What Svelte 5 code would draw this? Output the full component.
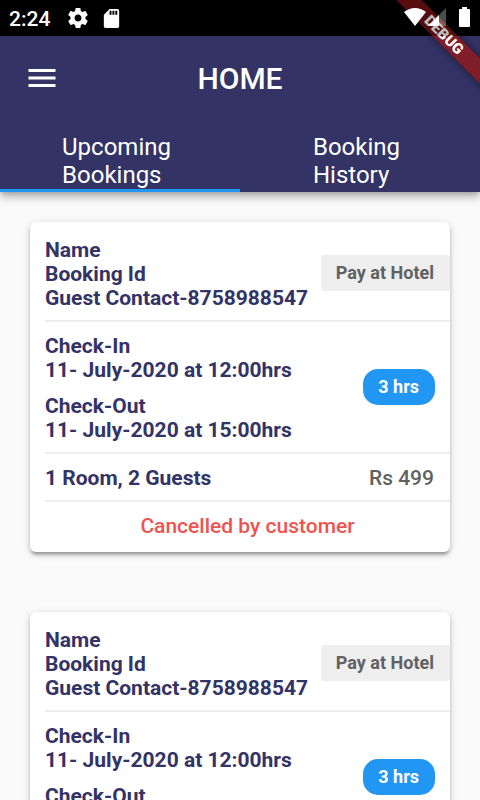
<script>
  let activeTab = $state(0);

  const tabs = [
    ['Upcoming', 'Bookings'],
    ['Booking', 'History'],
  ];

  const booking = {
    contact: '8758988547',
    payment: 'Pay at Hotel',
    checkIn: '11- July-2020 at 12:00hrs',
    checkOut: '11- July-2020 at 15:00hrs',
    duration: '3 hrs',
    party: '1 Room, 2 Guests',
    price: 'Rs 499',
    status: 'Cancelled by customer',
  };
  const bookings = [
    { id: 1, ...booking },
    { id: 2, ...booking },
  ];
</script>

<div class="screen">
  <div class="status-bar">
    <span class="clock">2:24</span>
    <svg class="gear" viewBox="0 0 24 24" aria-hidden="true">
      <path d="M19.43 12.98c.04-.32.07-.64.07-.98s-.03-.66-.07-.98l2.11-1.65c.19-.15.24-.42.12-.64l-2-3.46c-.12-.22-.39-.3-.61-.22l-2.49 1c-.52-.4-1.08-.73-1.69-.98l-.38-2.65C14.46 2.18 14.25 2 14 2h-4c-.25 0-.46.18-.49.42l-.38 2.65c-.61.25-1.17.59-1.69.98l-2.49-1c-.23-.09-.49 0-.61.22l-2 3.46c-.13.22-.07.49.12.64l2.11 1.65c-.04.32-.07.65-.07.98s.03.66.07.98l-2.11 1.65c-.19.15-.24.42-.12.64l2 3.46c.12.22.39.3.61.22l2.49-1c.52.4 1.08.73 1.69.98l.38 2.65c.03.24.24.42.49.42h4c.25 0 .46-.18.49-.42l.38-2.65c.61-.25 1.17-.59 1.69-.98l2.49 1c.23.09.49 0 .61-.22l2-3.46c.12-.22.07-.49-.12-.64l-2.11-1.65zM12 15.5c-1.93 0-3.5-1.57-3.5-3.5s1.57-3.5 3.5-3.5 3.5 1.57 3.5 3.5-1.57 3.5-3.5 3.5z" />
    </svg>
    <svg class="card-icon" viewBox="0 0 24 24" aria-hidden="true">
      <path d="M18 2h-8L4.02 8 4 20c0 1.1.9 2 2 2h12c1.1 0 2-.9 2-2V4c0-1.1-.9-2-2-2zm-6 6h-2V4h2v4zm3 0h-2V4h2v4zm3 0h-2V4h2v4z" />
    </svg>
    <div class="signals">
      <svg width="24" height="20" viewBox="0 0 24 20" aria-hidden="true">
        <path d="M12 19 1 5Q12-3 23 5Z" />
      </svg>
      <svg width="20" height="20" viewBox="0 0 20 20" aria-hidden="true">
        <path d="M1 19 19 1V19Z" opacity="0.3" />
        <path d="M1 19 12 8V19Z" />
      </svg>
      <svg class="battery" width="11" height="20" viewBox="0 0 11 20" aria-hidden="true">
        <path d="M3 0H8V2H10Q11 2 11 3V19Q11 20 10 20H1Q0 20 0 19V3Q0 2 1 2H3Z" />
      </svg>
    </div>
  </div>

  <header>
    <div class="toolbar">
      <button class="menu" aria-label="Open menu">
        <svg width="36" height="36" viewBox="0 0 24 24" aria-hidden="true">
          <path d="M3 18h18v-2H3v2zm0-5h18v-2H3v2zm0-7v2h18V6H3z" />
        </svg>
      </button>
      <h1>HOME</h1>
    </div>
    <div class="tabs" role="tablist">
      {#each tabs as [first, second], i}
        <button
          role="tab"
          class:active={activeTab === i}
          aria-selected={activeTab === i}
          onclick={() => (activeTab = i)}
        >
          <span>{first}<br />{second}</span>
        </button>
      {/each}
    </div>
  </header>

  <main>
    {#each bookings as item (item.id)}
      <article>
        <section>
          <div>
            <p>Name</p>
            <p>Booking Id</p>
            <p>Guest Contact-{item.contact}</p>
          </div>
          <span class="payment">{item.payment}</span>
        </section>
        <section>
          <div class="dates">
            <div>
              <p>Check-In</p>
              <p>{item.checkIn}</p>
            </div>
            <div>
              <p>Check-Out</p>
              <p>{item.checkOut}</p>
            </div>
          </div>
          <span class="duration">{item.duration}</span>
        </section>
        <section>
          <p>{item.party}</p>
          <p class="price">{item.price}</p>
        </section>
        <section class="outcome">
          <p>{item.status}</p>
        </section>
      </article>
    {/each}
  </main>

  <div class="ribbon-corner">
    <div class="ribbon">DEBUG</div>
    <div class="scrim"></div>
  </div>
</div>

<style>
  :global(body) {
    background: #fafafa;
  }

  .screen {
    position: relative;
    height: 100vh;
    display: flex;
    flex-direction: column;
    overflow: hidden;
    background: #fafafa;
    font-family: Roboto, sans-serif;
  }

  svg {
    display: block;
    fill: #fff;
  }

  .status-bar {
    flex: none;
    display: flex;
    align-items: center;
    height: 36px;
    box-sizing: border-box;
    padding: 0 10px 0 9px;
    background: #000;
    color: #fff;
  }

  .clock {
    padding-top: 2px;
    font-size: 21px;
    line-height: 34px;
    font-weight: 500;
    margin-right: 16px;
  }

  .gear {
    width: 24px;
    height: 24px;
    margin-right: 10px;
  }

  .card-icon {
    width: 23px;
    height: 23px;
  }

  .signals {
    position: relative;
    z-index: 3;
    display: flex;
    align-items: center;
    margin-left: auto;
    height: 34px;
    align-self: flex-start;
  }

  .signals .battery {
    margin-left: 12px;
  }

  header {
    position: relative;
    z-index: 1;
    flex: none;
    background: #333366;
    color: #fff;
    box-shadow:
      0 3px 6px -1px rgba(0, 0, 0, 0.2),
      0 6px 8px rgba(0, 0, 0, 0.14),
      0 1px 15px rgba(0, 0, 0, 0.12);
  }

  .toolbar {
    display: grid;
    grid-template-columns: 84px 1fr 84px;
    align-items: center;
    height: 84px;
  }

  button {
    margin: 0;
    padding: 0;
    border: 0;
    background: none;
    color: inherit;
    font: inherit;
    cursor: pointer;
  }

  .menu {
    display: flex;
    align-items: center;
    justify-content: center;
    height: 84px;
  }

  h1 {
    margin: 0;
    padding-top: 2px;
    text-align: center;
    font-size: 30px;
    line-height: 36px;
    font-weight: 500;
  }

  .tabs {
    display: flex;
  }

  .tabs button {
    flex: 1;
    display: flex;
    align-items: flex-end;
    justify-content: center;
    height: 72px;
    box-sizing: border-box;
    border-bottom: 3px solid transparent;
  }

  .tabs button.active {
    border-bottom-color: #2196f3;
  }

  .tabs span {
    padding-right: 7px;
    text-align: left;
    font-size: 24px;
    line-height: 28px;
  }

  main {
    flex: 1;
    min-height: 0;
    display: flex;
    flex-direction: column;
    gap: 60px;
    padding: 30px;
    overflow: hidden;
  }

  article {
    flex: none;
    padding: 4px 0 4px 15px;
    border-radius: 6px;
    background: #fff;
    box-shadow:
      0 4px 3px -2px rgba(0, 0, 0, 0.2),
      0 3px 4px rgba(0, 0, 0, 0.18),
      0 2px 8px rgba(0, 0, 0, 0.14);
  }

  section {
    display: flex;
    align-items: center;
    justify-content: space-between;
    padding: 12px 0 10px;
    color: #333366;
    font-size: 21px;
    line-height: 24px;
    font-weight: 700;
  }

  section + section {
    border-top: 2px solid #eee;
  }

  p {
    margin: 0;
  }

  .dates {
    display: grid;
    gap: 12px;
  }

  .payment,
  .duration {
    flex: none;
    margin-bottom: 2px;
    padding: 8px 15px;
    font-size: 18px;
    line-height: 20px;
    font-weight: 700;
  }

  .payment {
    padding-right: 16px;
    border-radius: 3px;
    background: #eee;
    color: #616161;
  }

  .duration {
    margin-right: 15px;
    padding-right: 16px;
    border-radius: 15px;
    background: #2196f3;
    color: #fff;
  }

  .price {
    padding-right: 16px;
    color: #616161;
    font-weight: 500;
  }

  .outcome {
    justify-content: center;
    color: #ef5350;
    font-weight: 500;
  }

  .ribbon-corner {
    position: absolute;
    z-index: 2;
    top: 0;
    right: 0;
    width: 110px;
    height: 110px;
    overflow: hidden;
    pointer-events: none;
  }

  .ribbon {
    position: absolute;
    top: 26px;
    right: -44px;
    width: 160px;
    transform: rotate(45deg);
    background:
      linear-gradient(rgba(183, 28, 28, 0.63), rgba(183, 28, 28, 0.63)),
      rgba(0, 0, 0, 0.4);
    box-shadow: 0 0 9px rgba(0, 0, 0, 0.5);
    color: #fff;
    text-align: center;
    font-size: 15px;
    line-height: 18px;
    font-weight: 900;
  }

  .scrim {
    position: absolute;
    top: 0;
    left: 0;
    right: 0;
    height: 36px;
    background: rgba(0, 0, 0, 0.25);
  }
</style>
